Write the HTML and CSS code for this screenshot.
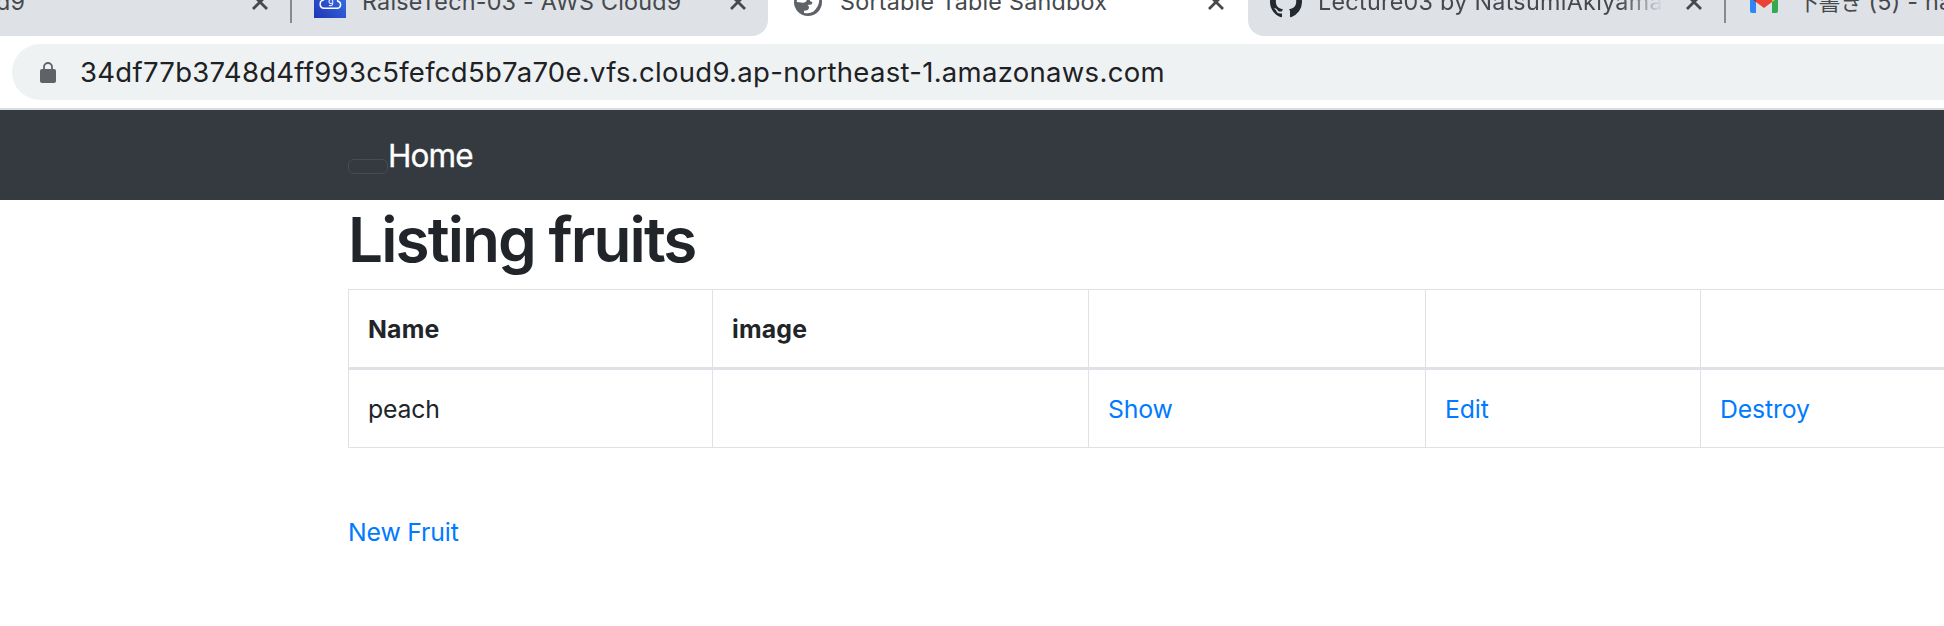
FILE: index.html
```html
<!DOCTYPE html>
<html lang="en">
<head>
<meta charset="utf-8">
<title>Sortable Table Sandbox</title>
<link rel="stylesheet" href="styles.css">
</head>
<body>
<div class="tabs">
  <div class="tab tab-first"><span class="title t-d9">d9</span><svg class="close" viewBox="0 0 16 16"><path d="M1 1 15 15M15 1 1 15"/></svg></div>
  <div class="tab tab-aws">
    <svg class="fav-aws" viewBox="0 0 32 32"><defs><linearGradient id="g" x1="0" y1="1" x2="1" y2="0"><stop offset="0" stop-color="#1f36b4"/><stop offset="1" stop-color="#3c76ee"/></linearGradient></defs><path fill="url(#g)" d="M0 0h32v32H0z"/><path d="M10 22.300h13.200a3.600 3.600 0 0 0 .6-7.100 7.400 7.400 0 0 0-14.300-1.200A4.200 4.200 0 0 0 10 22.300z" fill="none" stroke="#fff" stroke-width="1.500"/><path d="M18.700 16.500a2 2 0 1 1 0-2v3q0 2.700-3.800 2" fill="none" stroke="#dfe6ff" stroke-width="1.100"/></svg>
    <span class="title t-aws">RaiseTech-03 - AWS Cloud9</span><svg class="close" viewBox="0 0 16 16"><path d="M1 1 15 15M15 1 1 15"/></svg>
  </div>
  <div class="tab tab-active">
    <svg class="fav-globe" viewBox="0 0 28 28"><circle cx="14" cy="14" r="14" fill="#5f6368"/><path fill="#fff" d="M3 9l8 1 2 2q-1 3-4 2.800L2.800 14zM15 8l10 1q1.500 8-5.500 14.500-4.500 2.800-9.500 1.200v-1.900q4.800 0 5-3.200 0-2-1.500-2.600l3.700-.4q1.300-.6 1-2.600l-2.200-1z"/></svg>
    <span class="title t-sort">Sortable Table Sandbox</span><svg class="close" viewBox="0 0 16 16"><path d="M1 1 15 15M15 1 1 15"/></svg>
  </div>
  <div class="tab tab-github">
    <svg class="fav-github" viewBox="0 0 16 16"><path fill="#24292f" d="M8 0C3.580 0 0 3.580 0 8c0 3.540 2.290 6.530 5.470 7.590.4.070.55-.17.55-.38 0-.19-.01-.82-.01-1.490-2.010.37-2.530-.49-2.690-.94-.09-.23-.48-.94-.82-1.130-.28-.15-.68-.52-.01-.53.63-.01 1.080.58 1.230.82.72 1.210 1.870.87 2.330.66.070-.52.28-.87.51-1.070-1.780-.2-3.640-.89-3.640-3.950 0-.87.31-1.590.82-2.150-.08-.2-.36-1.020.08-2.120 0 0 .67-.21 2.200.82.64-.18 1.320-.27 2-.27s1.360.09 2 .27c1.530-1.040 2.200-.82 2.200-.82.44 1.100.16 1.920.08 2.120.51.56.82 1.270.82 2.150 0 3.070-1.870 3.750-3.650 3.950.29.25.54.73.54 1.480 0 1.070-.01 1.930-.01 2.200 0 .21.15.46.55.38A8.010 8.010 0 0 0 16 8c0-4.420-3.580-8-8-8z"/></svg>
    <span class="title t-lecture">Lecture03 by NatsumiAkiyama</span><svg class="close" viewBox="0 0 16 16"><path d="M1 1 15 15M15 1 1 15"/></svg>
  </div>
  <div class="tab tab-gmail">
    <svg class="fav-gmail" viewBox="0 0 28 22"><path fill="#2f86f6" d="M0 3l6 4v15H2a2 2 0 0 1-2-2z"/><path fill="#34a853" d="M28 3l-6 4v15h4a2 2 0 0 0 2-2z"/><path fill="#fbbc04" d="M22 2l6-1v6l-6 4z"/><path fill="#c5221f" d="M0 1l6 1v9L0 7z"/><path fill="#ea4335" d="M6 2l8 6 8-6v9l-8 6-8-6z"/></svg>
    <span class="title t-mail"><span class="jp" lang="ja">下書き</span> (5) - na</span>
  </div>
</div>
<div class="toolbar">
  <div class="omnibox">
    <svg class="lock" viewBox="0 0 16 21"><path d="M4 9V5a4 4 0 0 1 8 0v4" fill="none" stroke="#5f6368" stroke-width="1.800"/><rect y="7" width="16" height="14" rx="2" fill="#5f6368"/></svg>
    <span class="url">34df77b3748d4ff993c5fefcd5b7a70e.vfs.cloud9.ap-northeast-1.amazonaws.com</span>
  </div>
</div>
<nav class="navbar"><button class="toggler" aria-label="Menu"></button><a class="brand">Home</a></nav>
<main class="container">
  <h1 class="heading">Listing fruits</h1>
  <table class="table">
    <colgroup><col class="c1"><col class="c2"><col class="c3"><col class="c4"><col class="c5"></colgroup>
    <thead><tr><th>Name</th><th>image</th><th></th><th></th><th></th></tr></thead>
    <tbody><tr><td>peach</td><td></td><td><a>Show</a></td><td><a>Edit</a></td><td><a>Destroy</a></td></tr></tbody>
  </table>
  <a class="new">New Fruit</a>
</main>
</body>
</html>
```
FILE: styles.css
```css
* { box-sizing: border-box; }
body { margin: 0; height: 626px; overflow: hidden; background: #fff; color: #212529; font-family: Inter, "Noto Sans CJK JP", sans-serif; font-size: 24.8px; line-height: 38.4px; letter-spacing: -.15px; }
svg { display: block; flex: none; }

.tabs { display: flex; align-items: flex-end; width: 1944px; height: 36px; overflow: hidden; background: #fff; }
.tab { display: flex; flex: none; align-items: center; height: 68px; background: #dee1e6; color: #45494d; overflow: hidden; }
.tab-first { width: 292px; padding-right: 24px; justify-content: space-between; background: linear-gradient(#868b90, #868b90) right 0 / 2px 55px no-repeat #dee1e6; }
.tab-aws { width: 476px; padding-left: 22px; border-bottom-right-radius: 16px; }
.tab-active { width: 480px; padding-left: 26px; background: #fff; }
.tab-github { width: 478px; padding-left: 22px; border-bottom-left-radius: 16px; background: linear-gradient(#868b90, #868b90) right 0 / 2px 55px no-repeat #dee1e6; }
.tab-gmail { width: 218px; padding-left: 24px; }
.title { flex: none; font-size: 23.3px; line-height: 32px; letter-spacing: .24px; white-space: nowrap; }
.t-d9 { margin-left: -4px; }
.t-aws { width: 368px; margin-left: 16px; }
.t-sort { width: 368px; margin-left: 18px; }
.t-lecture { width: 345px; margin: 0 23px 0 16px; letter-spacing: .3px; -webkit-mask-image: linear-gradient(90deg, #000 88%, transparent); mask-image: linear-gradient(90deg, #000 88%, transparent); }
.t-mail { margin-left: 19px; }
.jp { font-size: 22px; letter-spacing: -.4px; }
.close { width: 16px; height: 16px; fill: none; stroke: #45494d; stroke-width: 2.800; }
.fav-aws, .fav-github { width: 32px; height: 32px; }
.fav-globe { width: 28px; height: 28px; }
.fav-gmail { width: 28px; height: 22px; }

.toolbar { height: 74px; padding: 8px 0 8px 12px; border-bottom: 2px solid #d9dde0; }
.omnibox { display: flex; align-items: center; height: 56px; padding-left: 28px; border-radius: 28px 0 0 28px; background: #eef2f3; }
.lock { width: 16px; height: 21px; }
.url { margin-left: 24px; font-size: 27.5px; letter-spacing: .29px; color: #202124; white-space: nowrap; }

.navbar { display: flex; height: 90px; padding-left: 348px; background: #343a40; }
.toggler { width: 40px; height: 15px; margin: 49px 0 0; padding: 0; border: 1px solid #484d50; border-radius: 6px; background: none; }
.brand { padding-top: 22px; line-height: 48px; font-size: 31.5px; letter-spacing: -.9px; color: #fff; -webkit-text-stroke: .3px #fff; }

.container { padding-left: 348px; }
.heading { height: 89px; margin: 0; font-size: 62px; line-height: 80px; font-weight: 600; letter-spacing: -1.9px; }
.table { width: 1776px; table-layout: fixed; border-collapse: collapse; }
.c1 { width: 364px; }
.c2 { width: 376px; }
.c3 { width: 337px; }
.c4 { width: 275px; }
.c5 { width: 424px; }
.table th, .table td { height: 79px; padding: 2px 19px 0; border: 1px solid #dee2e6; text-align: left; vertical-align: middle; }
.table thead th { border-bottom: 3px solid #dee2e6; font-weight: 700; letter-spacing: .2px; }
a { color: #007bff; }
.new { display: block; margin-top: 65px; }
```
